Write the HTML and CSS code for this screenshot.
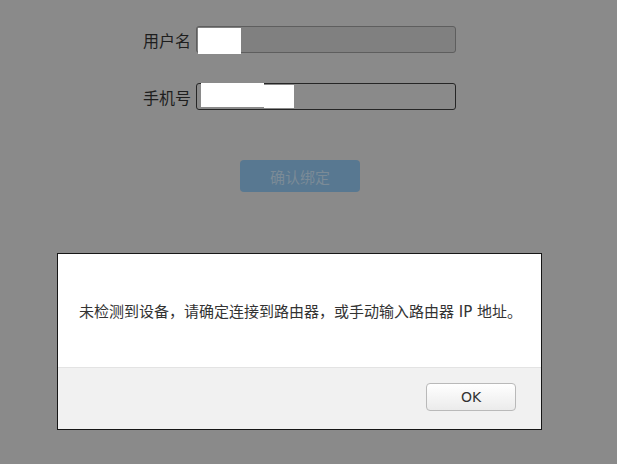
FILE: index.html
```html
<!DOCTYPE html>
<html lang="zh-CN">
<head>
<meta charset="utf-8">
<title>绑定</title>
<link rel="stylesheet" href="styles.css">
</head>
<body>
<div class="page">
  <form class="bind-form">
    <div class="row">
      <label class="label">用户名</label>
      <div class="input input-idle"><span class="mask mask-user"></span></div>
    </div>
    <div class="row">
      <label class="label">手机号</label>
      <div class="input input-focus"><span class="mask mask-phone-a"></span><span class="mask mask-phone-b"></span></div>
    </div>
    <div class="actions">
      <button type="button" class="confirm">确认绑定</button>
    </div>
  </form>
</div>

<div class="dialog">
  <div class="dialog-body">未检测到设备，请确定连接到路由器，或手动输入路由器 IP 地址。</div>
  <div class="dialog-footer">
    <button type="button" class="ok">OK</button>
  </div>
</div>
</body>
</html>
```

FILE: styles.css
```css
html, body {
  margin: 0;
  padding: 0;
}

body {
  background: #8a8a8a;
  width: 617px;
  height: 464px;
  overflow: hidden;
  font-family: "Noto Sans CJK SC", "DejaVu Sans", sans-serif;
}

.page {
  padding-top: 26px;
}

.bind-form {
  margin-left: 143px;
  width: 313px;
}

.row {
  display: flex;
  align-items: center;
  gap: 5px;
  margin-bottom: 30px;
}

.label {
  width: 48px;
  font-size: 16px;
  line-height: 20px;
  color: #1e1e1e;
  white-space: nowrap;
}

.input {
  box-sizing: border-box;
  width: 260px;
  height: 27px;
  border-radius: 3px;
  display: flex;
  align-items: flex-start;
}

.input-idle {
  background: #808080;
  border: 1px solid #5e5e5e;
}

.input-focus {
  background: #8a8a8a;
  border: 1px solid #262626;
}

.mask {
  display: block;
  background: #ffffff;
}

.mask-user {
  width: 43px;
  height: 26px;
  margin-left: 1px;
  margin-top: 1px;
}

.mask-phone-a {
  width: 63px;
  height: 24px;
  margin-left: 4px;
  margin-top: -1px;
}

.mask-phone-b {
  width: 30px;
  height: 23px;
  margin-top: 1px;
}

.actions {
  padding-top: 20px;
  padding-left: 97px;
}

.confirm {
  width: 120px;
  height: 32px;
  border: none;
  border-radius: 4px;
  background: #587891;
  color: #7b8b97;
  font-family: "Noto Sans CJK SC", sans-serif;
  font-size: 15px;
  padding: 0;
}

.dialog {
  position: fixed;
  left: 57px;
  top: 253px;
  width: 483px;
  border: 1px solid #161616;
  background: #ffffff;
}

.dialog-body {
  height: 113px;
  box-sizing: border-box;
  padding: 0 21px;
  display: flex;
  align-items: center;
  font-family: "DejaVu Sans", "Noto Sans CJK SC", sans-serif;
  font-size: 15px;
  color: #333333;
  white-space: nowrap;
}

.dialog-footer {
  height: 62px;
  box-sizing: border-box;
  background: #f1f1f1;
  border-top: 1px solid #e3e3e3;
  display: flex;
  justify-content: flex-end;
  align-items: flex-start;
  padding-top: 15px;
  padding-right: 25px;
}

.ok {
  width: 90px;
  height: 28px;
  box-sizing: border-box;
  border: 1px solid #b9b9b9;
  border-radius: 4px;
  background: linear-gradient(#ffffff, #ebebeb);
  color: #333333;
  font-family: "DejaVu Sans", sans-serif;
  font-size: 14px;
  padding: 0;
}
```
